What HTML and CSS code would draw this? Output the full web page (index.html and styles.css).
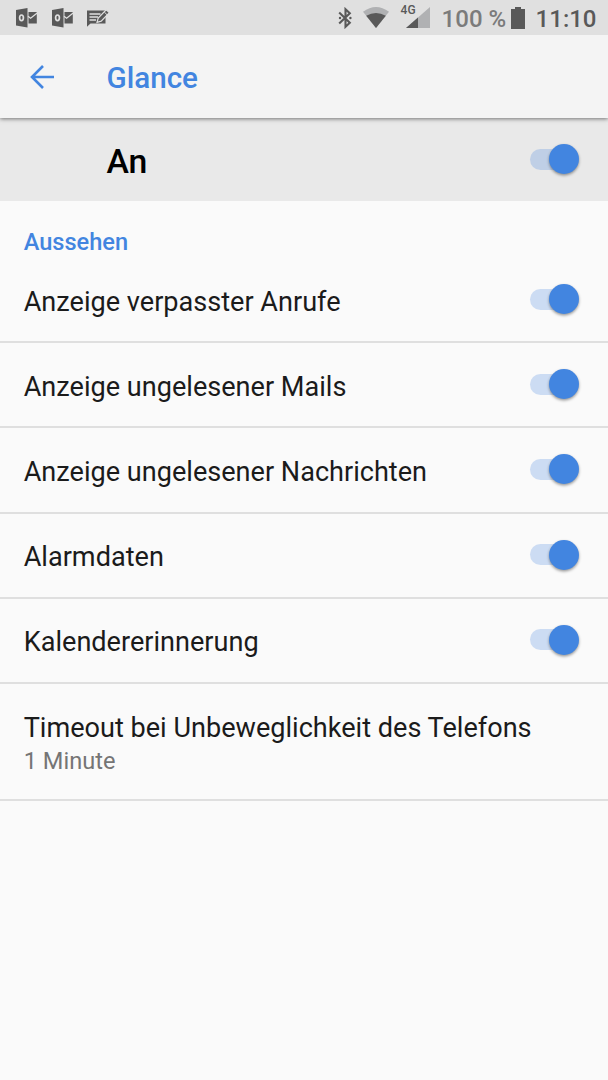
FILE: index.html
```html
<!DOCTYPE html>
<html lang="de">
<head>
  <meta charset="UTF-8" />
  <meta name="viewport" content="width=device-width, initial-scale=1.0"/>
  <title>Glance</title>
  <link rel="stylesheet" href="styles.css">
</head>
<body>
  <!-- Status bar -->
  <div class="status-bar">
    <div class="notifications">
      <svg class="outlook" width="22" height="20" viewBox="0 0 22 20">
        <path class="dark" d="M0 2 11.5 0V19.5L0 17.5Z"/>
        <ellipse class="ring" cx="5.5" cy="9.8" rx="1.9" ry="2.8"/>
        <path class="dark" d="M12.5 4H20.8V15.5H12.5Z"/>
        <path class="fold" d="M12 8.2 14.6 10.2 21.5 4.8"/>
      </svg>
      <svg class="outlook" width="22" height="20" viewBox="0 0 22 20">
        <path class="dark" d="M0 2 11.5 0V19.5L0 17.5Z"/>
        <ellipse class="ring" cx="5.5" cy="9.8" rx="1.9" ry="2.8"/>
        <path class="dark" d="M12.5 4H20.8V15.5H12.5Z"/>
        <path class="fold" d="M12 8.2 14.6 10.2 21.5 4.8"/>
      </svg>
      <svg width="23" height="18" viewBox="0 0 23 18">
        <path class="dark" d="M0 1.5H18.5V14.5H3.5L0 17.8Z"/>
        <path class="fold" d="M2.5 5H13.5M2.5 8H11M2.5 11H9"/>
        <path class="pencil" d="M10 13.4 11.2 9 19.2 .8 22.3 3.6 14.2 12.1Z"/>
        <path class="nib" d="M17.3 3 20 5.7"/>
      </svg>
    </div>
    <div class="system">
      <svg class="bluetooth" width="14" height="22" viewBox="0 0 14 22">
        <path d="M1.2 5.5 11.8 15.8 7.5 19.8V2.2L11.8 6.2 1.2 16.5"/>
        <circle cx="2" cy="11" r="1.2"/>
        <circle cx="12.4" cy="11" r="1.2"/>
      </svg>
      <svg class="wifi" width="26" height="21" viewBox="0 0 26 21">
        <path class="light" d="M0 4.8Q13 -4.6 26 4.8L13 21Z"/>
        <path class="dark" d="M3.2 8.8Q13 3.2 22.8 8.8L13 21Z"/>
      </svg>
      <div class="signal">
        <span class="network">4G</span>
        <svg width="24" height="21" viewBox="0 0 24 21">
          <path class="light" d="M24 0V21H0Z"/>
          <path class="dark" d="M12 10.5V21H0Z"/>
        </svg>
      </div>
      <span class="percent">100 %</span>
      <svg class="battery" width="14" height="22" viewBox="0 0 14 22">
        <path class="dark" d="M4 0H10V2H14V22H0V2H4Z"/>
      </svg>
      <span class="clock">11:10</span>
    </div>
  </div>

  <!-- Title bar -->
  <header class="toolbar">
    <svg class="back" width="24" height="24" viewBox="0 0 24 24">
      <path d="M24 12H2M13 1 2 12 13 23"/>
    </svg>
    <h1>Glance</h1>
  </header>

  <!-- Main switch -->
  <div class="master">
    <span class="state">An</span>
    <span class="switch"></span>
  </div>

  <!-- Settings -->
  <main>
    <h2>Aussehen</h2>
    <ul class="settings">
      <li><p>Anzeige verpasster Anrufe</p><span class="switch"></span></li>
      <li><p>Anzeige ungelesener Mails</p><span class="switch"></span></li>
      <li><p>Anzeige ungelesener Nachrichten</p><span class="switch"></span></li>
      <li><p>Alarmdaten</p><span class="switch"></span></li>
      <li><p>Kalendererinnerung</p><span class="switch"></span></li>
      <li class="timeout">
        <div>
          <p>Timeout bei Unbeweglichkeit des Telefons</p>
          <p class="value">1 Minute</p>
        </div>
      </li>
    </ul>
  </main>
</body>
</html>
```
FILE: styles.css
```css
* { margin: 0; padding: 0; box-sizing: border-box; }
body {
  min-height: 1080px;
  font-family: Roboto, sans-serif;
  color: #1b1b1b;
  background: #fafafa;
  overflow: hidden;
}
svg { display: block; flex: none; }
.dark { fill: #595959; }
.light { fill: #b0b1b3; }
/* Status bar */
.status-bar {
  position: relative;
  z-index: 2;
  display: flex;
  justify-content: space-between;
  height: 35px;
  padding: 0 11.5px 0 16px;
  background: #e0e0e0;
}
.notifications {
  display: flex;
  align-items: center;
  gap: 13.5px;
}
.ring { fill: none; stroke: #e0e0e0; stroke-width: 1.7; }
.fold { fill: none; stroke: #e0e0e0; stroke-width: 1.3; }
.pencil { fill: #595959; stroke: #e0e0e0; stroke-width: 1.2; }
.nib { stroke: #e0e0e0; stroke-width: 1; }
.system {
  display: flex;
  align-items: center;
}
.bluetooth { margin-right: 11px; }
.bluetooth path { fill: none; stroke: #595959; stroke-width: 2.1; }
.bluetooth circle { fill: #595959; }
.wifi { margin-right: 12px; }
.signal {
  position: relative;
  padding-left: 5px;
  margin-right: 12px;
}
.network {
  position: absolute;
  left: 0;
  top: -3px;
  font-size: 12px;
  line-height: 13px;
  font-weight: 500;
  color: #595959;
}
.percent, .clock {
  font-size: 24px;
  line-height: 35px;
  font-weight: 500;
  white-space: nowrap;
  padding-top: 3px;
}
.percent { color: #7b7b7b; width: 69px; }
.clock { color: #595959; margin-left: 11px; }
/* Title bar */
.toolbar {
  position: relative;
  z-index: 1;
  display: flex;
  align-items: center;
  height: 83px;
  padding-left: 29.5px;
  background: #f4f4f4;
  box-shadow: 0 1px 4px rgba(0,0,0,0.5);
}
.back path { fill: none; stroke: #4285e0; stroke-width: 2.6; }
h1 {
  margin: 2px 0 0 53px;
  font-size: 29.6px;
  font-weight: 500;
  color: #4285e0;
}
/* Main switch */
.master {
  display: flex;
  justify-content: space-between;
  align-items: center;
  height: 83px;
  padding: 0 29px 0 106.5px;
  background: #e9e9e9;
  font-size: 33.8px;
  font-weight: 500;
  color: #000;
}
.state { padding-top: 3px; }
.switch {
  position: relative;
  flex: none;
  width: 49px;
  height: 30px;
  margin-bottom: 1px;
}
.switch::before {
  content: "";
  position: absolute;
  left: 0;
  top: 4.5px;
  width: 42px;
  height: 21px;
  border-radius: 11px;
  background: rgba(66,133,224,0.25);
}
.switch::after {
  content: "";
  position: absolute;
  right: 0;
  top: 0;
  width: 30px;
  height: 30px;
  border-radius: 50%;
  background: #4285e0;
  box-shadow: 0 1.5px 3px rgba(0,0,0,0.4);
}
/* Settings */
h2 {
  height: 57px;
  padding: 26px 23.7px 0;
  font-size: 23.6px;
  line-height: 30px;
  font-weight: 500;
  color: #4285e0;
}
.settings { list-style: none; }
.settings li {
  display: flex;
  justify-content: space-between;
  align-items: center;
  height: 85.2px;
  padding: 0 29px 0 23.7px;
  border-bottom: 2px solid #dfdfdf;
  font-size: 27.1px;
}
.settings p { padding-top: 4px; }
.settings .timeout { height: 117px; }
.timeout p { line-height: 36px; }
.settings .value {
  padding-top: 0;
  font-size: 23.6px;
  line-height: 30px;
  color: #757575;
}
```
